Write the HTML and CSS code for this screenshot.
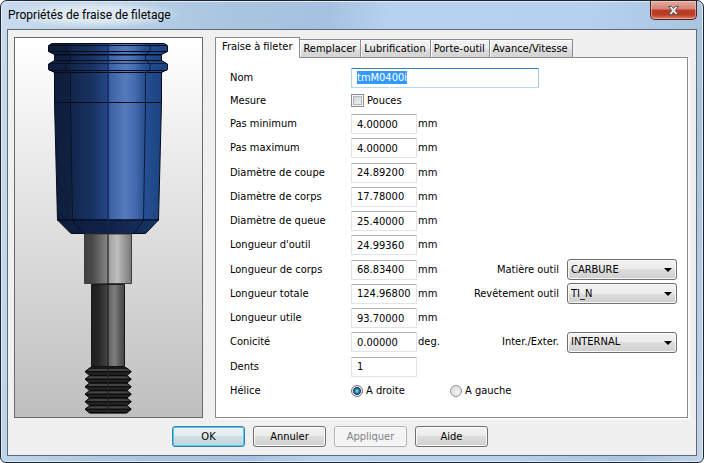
FILE: index.html
```html
<!DOCTYPE html>
<html lang="fr">
<head>
<meta charset="utf-8">
<title>Propriétés de fraise de filetage</title>
<link rel="stylesheet" href="styles.css">
</head>
<body>
<div class="window">
  <header class="titlebar">
    <h1 class="title">Propriétés de fraise de filetage</h1>
    <button class="close" type="button" aria-label="Fermer">
      <svg width="13" height="11" viewBox="0 0 13 11"><path d="M1.500 1.500h3l2 2.200 2-2.200h3L8.200 5.500l3.300 4h-3l-2-2.200-2 2.200h-3l3.300-4z" fill="#f6f6f6" stroke="#4d5268" stroke-width="1"/></svg>
    </button>
  </header>
  <form class="client">
    <div class="main">
      <div class="preview">
        <svg class="tool" viewBox="0 0 187 379" preserveAspectRatio="xMidYMin meet">
          <defs>
            <linearGradient id="blue" gradientUnits="userSpaceOnUse" x1="39" x2="147" y1="0" y2="0">
              <stop offset="0" stop-color="#0e1d3d"/><stop offset=".15" stop-color="#10203f"/>
              <stop offset=".16" stop-color="#12264c"/><stop offset=".36" stop-color="#183362"/>
              <stop offset=".49" stop-color="#234685"/><stop offset=".52" stop-color="#3b62a6"/>
              <stop offset=".66" stop-color="#567bbb"/><stop offset=".75" stop-color="#446baf"/>
              <stop offset=".84" stop-color="#25508f"/><stop offset=".86" stop-color="#234e91"/>
              <stop offset="1" stop-color="#1d4380"/>
            </linearGradient>
            <linearGradient id="cone">
              <stop offset="0" stop-color="#0d1c3a"/><stop offset=".5" stop-color="#10224a"/>
              <stop offset=".75" stop-color="#142b57"/><stop offset="1" stop-color="#173669"/>
            </linearGradient>
            <linearGradient id="shank">
              <stop offset="0" stop-color="#404040"/><stop offset=".15" stop-color="#474747"/>
              <stop offset=".48" stop-color="#858585"/><stop offset=".53" stop-color="#a2a2a2"/>
              <stop offset=".7" stop-color="#bebebe"/><stop offset=".85" stop-color="#999"/>
              <stop offset="1" stop-color="#777"/>
            </linearGradient>
            <linearGradient id="neck">
              <stop offset="0" stop-color="#202020"/><stop offset=".2" stop-color="#252525"/>
              <stop offset=".48" stop-color="#424242"/><stop offset=".54" stop-color="#666"/>
              <stop offset=".7" stop-color="#7d7d7d"/><stop offset=".85" stop-color="#5d5d5d"/>
              <stop offset="1" stop-color="#444"/>
            </linearGradient>
            <g id="tooth">
              <path d="M74.500 0h37.500l4.300 3.700L112 7.500H74.500L70 3.700z" fill="#232323" stroke="#0c0c0c"/>
              <path d="M75 1h36.500l3.500 2.200H71.500z" fill="#444"/>
              <path d="M70.500 3.700h45.500M75 7.300h36.500" stroke="#050505"/>
            </g>
          </defs>
          <g stroke="#050b18" stroke-width="1">
            <path d="M39.500 34.500h107v30l-3 117.500h-101l-3-117.500z" fill="url(#blue)"/>
            <path d="M42.500 182h101l-13 13.500H56z" fill="url(#cone)"/>
            <path d="M39.500 16h107v8h-107z" fill="url(#blue)"/>
            <path d="M37 5.500h112l3.500 2v6L146.500 16.500h-107l-6-3v-6z" fill="url(#blue)"/>
            <path d="M39.500 22.500h107l6 3.500v5.500l-6 3h-107l-6-3V26z" fill="url(#blue)"/>
            <path d="M35 7.500h116.500M34 13.500h118M39.500 17h107M34 32.500h118M39.500 64.500h107" fill="none"/>
            <path d="M39.500 22.500h107M35 25.500h116.500" fill="none" opacity=".65"/>
            <path d="M53 5l-2 3v5l4.500 4v5l-4.500 4v6l4.500 3v30l2 117L67 195M133 5l2 3v5l-4.500 4v5l4.500 4v6l-4.500 3v30l-2 117-9 13" fill="none" opacity=".75"/>
          </g>
          <path d="M69.500 196h47v49.500h-47z" fill="url(#shank)" stroke="#3d3d3d"/>
          <path d="M76.500 246.500h33V329h-33z" fill="url(#neck)" stroke="#191919"/>
          <path d="M76.500 328.500h33l3 3H74z" fill="#292929" stroke="#111"/>
          <use href="#tooth" y="330"/><use href="#tooth" y="337.500"/><use href="#tooth" y="345"/>
          <use href="#tooth" y="352.500"/><use href="#tooth" y="360"/><use href="#tooth" y="367.500"/>
          <path d="M93 5v190" stroke="#14264f" stroke-width="2" opacity=".65"/>
          <path d="M93 196v179" stroke="#222" stroke-width="2" opacity=".6"/>
        </svg>
      </div>
      <div class="pages">
        <div class="tabs" role="tablist">
          <button class="tab active" type="button" role="tab" aria-selected="true">Fraise à fileter</button>
          <button class="tab" type="button" role="tab">Remplacer</button>
          <button class="tab" type="button" role="tab">Lubrification</button>
          <button class="tab" type="button" role="tab">Porte-outil</button>
          <button class="tab" type="button" role="tab">Avance/Vitesse</button>
        </div>
        <div class="panel" role="tabpanel">
          <label class="name" for="nom">Nom</label>
          <input class="field wide" id="nom" type="text" value="tmM0400i">

          <span class="name">Mesure</span>
          <label class="choice paired"><input class="check" type="checkbox">Pouces</label>

          <label class="name" for="pmin">Pas minimum</label>
          <input class="field" id="pmin" type="text" value="4.00000"><span class="unit">mm</span>

          <label class="name" for="pmax">Pas maximum</label>
          <input class="field" id="pmax" type="text" value="4.00000"><span class="unit">mm</span>

          <label class="name" for="dcoupe">Diamètre de coupe</label>
          <input class="field" id="dcoupe" type="text" value="24.89200"><span class="unit">mm</span>

          <label class="name" for="dcorps">Diamètre de corps</label>
          <input class="field" id="dcorps" type="text" value="17.78000"><span class="unit">mm</span>

          <label class="name" for="dqueue">Diamètre de queue</label>
          <input class="field" id="dqueue" type="text" value="25.40000"><span class="unit">mm</span>

          <label class="name" for="loutil">Longueur d'outil</label>
          <input class="field" id="loutil" type="text" value="24.99360"><span class="unit">mm</span>

          <label class="name" for="lcorps">Longueur de corps</label>
          <input class="field" id="lcorps" type="text" value="68.83400"><span class="unit">mm</span>
          <label class="side" for="matiere">Matière outil</label>
          <select class="list" id="matiere"><option>CARBURE</option></select>

          <label class="name" for="ltotale">Longueur totale</label>
          <input class="field" id="ltotale" type="text" value="124.96800"><span class="unit">mm</span>
          <label class="side" for="revetement">Revêtement outil</label>
          <select class="list" id="revetement"><option>TI_N</option></select>

          <label class="name" for="lutile">Longueur utile</label>
          <input class="field" id="lutile" type="text" value="93.70000"><span class="unit">mm</span>

          <label class="name" for="conicite">Conicité</label>
          <input class="field" id="conicite" type="text" value="0.00000"><span class="unit">deg.</span>
          <label class="side" for="inter">Inter./Exter.</label>
          <select class="list" id="inter"><option>INTERNAL</option></select>

          <label class="name" for="dents">Dents</label>
          <input class="field" id="dents" type="text" value="1">

          <span class="name">Hélice</span>
          <label class="choice paired"><input class="radio" type="radio" name="helice" checked>A droite</label>
          <label class="choice"><input class="radio" type="radio" name="helice">A gauche</label>
        </div>
      </div>
    </div>
    <footer class="actions">
      <button class="push default" type="button">OK</button>
      <button class="push" type="button">Annuler</button>
      <button class="push" type="button" disabled>Appliquer</button>
      <button class="push" type="button">Aide</button>
    </footer>
  </form>
</div>
<script src="script.js"></script>
</body>
</html>
```
FILE: styles.css
```css
* { box-sizing: border-box; }

body {
  margin: 0;
  background: #fff;
  color: #000;
  font: 11px/14px "DejaVu Sans Condensed", "DejaVu Sans", sans-serif;
}

button, input, select { font: inherit; color: inherit; margin: 0; }

.window {
  display: flex;
  flex-direction: column;
  min-height: 100vh;
  padding: 0 6px 6px;
  border: 1px solid #1e242c;
  border-radius: 7px 7px 6px 6px;
  background: linear-gradient(100deg, #c9dbee 0, #a9c5e0 30%, #a4c2df 42%, #b7d2ee 50%, #b5d1ed 75%, #a9c3df 92%, #c3d5e8 100%);
  box-shadow: inset 0 0 0 1px #e0edf9;
}

.titlebar {
  display: flex;
  justify-content: space-between;
  align-items: flex-start;
  height: 28px;
}

.title {
  margin: 0;
  padding: 6px 12px 5px 1px;
  background: radial-gradient(closest-side, rgba(255, 255, 255, .5) 50%, rgba(255, 255, 255, 0));
  font: 12px/16px Roboto, "Open Sans", sans-serif;
}

.close {
  display: flex;
  align-items: center;
  justify-content: center;
  width: 47px;
  height: 19px;
  padding: 0;
  border: 1px solid #4d1f24;
  border-top: 0;
  border-radius: 0 0 5px 5px;
  background: linear-gradient(#e5aa9f 0, #d38374 45%, #be3a23 50%, #b93c22 75%, #dc8060 100%);
  box-shadow: inset 0 0 0 1px rgba(255, 220, 210, .5);
}

.client {
  display: flex;
  flex: 1;
  flex-direction: column;
  gap: 8px;
  padding: 7px 8px 8px 6px;
  border: 1px solid #5d6b79;
  background: #f0f0f0;
}

.main { display: flex; flex: 1; gap: 12px; }

.preview {
  display: flex;
  flex: 0 0 189px;
  border: 1px solid #696969;
  background: linear-gradient(#fff, #bfbfbf);
}

.tool { width: 100%; }

.pages { display: flex; flex: 1; flex-direction: column; }

.tabs { display: flex; align-items: flex-end; }

.tab {
  height: 18px;
  padding: 0 4px 0 3px;
  border: 1px solid #898c95;
  border-bottom: 0;
  border-left-width: 0;
  background: linear-gradient(#f3f3f3 0, #ececec 50%, #dedede 50%, #d3d3d3 100%);
  box-shadow: inset 1px 1px 0 #fff;
  white-space: nowrap;
}

.tab.active {
  z-index: 1;
  height: 21px;
  margin-bottom: -1px;
  padding: 0 7px 2px 6px;
  border-left-width: 1px;
  background: #fff;
}

.panel {
  display: grid;
  flex: 1;
  grid-template-columns: 121px 66px 33px 1fr 110px;
  grid-template-rows: 23px 23px repeat(12, 1fr);
  align-items: center;
  padding: 8px 10px 14px 14px;
  border: 1px solid #898c95;
  background: #fff;
  box-shadow: 2px 2px 0 #fbfbfb;
}

.name { grid-column: 1; }

.field {
  grid-column: 2;
  width: 100%;
  height: 20px;
  padding: 0 5px;
  border: 1px solid #e2e3ea;
  border-top-color: #abadb3;
  border-radius: 1px;
  background: #fff;
  outline: 0;
}

.field.wide { grid-column: 2 / 5; width: 188px; }
.field:focus { border-color: #3d7bad #a4c9e3 #b7d9ed #b5cfe7; }
.field::selection { background: #39f; color: #fff; }

.unit { padding-left: 1px; }

.side { padding-right: 8px; text-align: right; }

.list {
  width: 100%;
  height: 21px;
  padding: 0 18px 0 3px;
  border: 1px solid #707070;
  border-radius: 3px;
  appearance: none;
  background:
    url("data:image/svg+xml,%3Csvg xmlns='http://www.w3.org/2000/svg' width='8' height='4'%3E%3Cpath d='M0 0h8L4 4z'/%3E%3C/svg%3E") right 4px top 8px no-repeat,
    linear-gradient(#f2f2f2 0, #ebebeb 50%, #ddd 50%, #cfcfcf 100%);
  box-shadow: inset 0 0 0 1px #f8f8f8;
}

.choice { display: flex; align-items: center; gap: 3px; }
.choice.paired { grid-column: 2 / 4; }

.check {
  width: 13px;
  height: 13px;
  border: 1px solid #8e8f8f;
  appearance: none;
  background: linear-gradient(135deg, #cbcfd5, #f6f6f6);
  box-shadow: inset 0 0 0 1px #f4f4f4, inset 0 0 0 2px #b4b9bf;
}

.radio {
  width: 12px;
  height: 12px;
  border: 1px solid #8e8f8f;
  border-radius: 50%;
  appearance: none;
  background: radial-gradient(circle at 60% 60%, #f6f6f6, #c6cad0);
  box-shadow: inset 0 0 0 1px #eee;
}

.radio:checked {
  border-color: #6f7478;
  background: radial-gradient(circle at 50% 50%, #9be4ff 0, #2f87b5 2px, #0d2c4c 4px, #e8eaec 4px);
}

.actions { display: flex; gap: 8px; padding-left: 158px; }

.push {
  width: 73px;
  height: 21px;
  padding: 0;
  border: 1px solid #707070;
  border-radius: 3px;
  background: linear-gradient(#f2f2f2 0, #ebebeb 50%, #ddd 50%, #cfcfcf 100%);
  box-shadow: inset 0 0 0 1px #fbfbfb;
}

.push.default {
  border-color: #3c7fb1;
  background: linear-gradient(#eef3f6 0, #e3ebef 50%, #cfdee6 50%, #c3d3dc 100%);
  box-shadow: inset 0 0 0 1px #45d0f5;
}

.push:disabled {
  border-color: #adb2b5;
  background: #f4f4f4;
  color: #838383;
}
```
FILE: script.js
```js
document.getElementById("nom").select();
```
